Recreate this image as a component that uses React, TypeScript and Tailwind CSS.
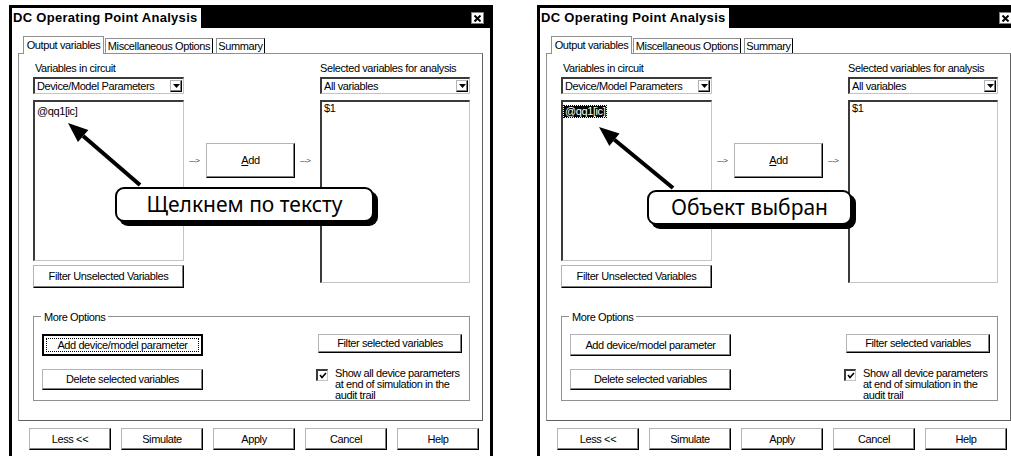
import React from "react";

const ui = "font-['Liberation_Sans',Arial,sans-serif] text-[11px] tracking-[-0.4px] text-black";

const raised =
  "border border-t-[#b4b4b4] border-l-[#b4b4b4] border-r-black border-b-black shadow-[inset_-1px_-1px_0_#808080]";
const sunken =
  "border-t-2 border-l-2 border-r border-b border-t-[#3a3a3a] border-l-[#3a3a3a] border-r-[#c4c4c4] border-b-[#c4c4c4]";

const Button = ({
  label,
  className = "",
  isDefault = false,
}: {
  label: React.ReactNode;
  className?: string;
  isDefault?: boolean;
}) => {
  if (isDefault) {
    return (
      <div className={`flex border-2 border-black bg-white p-[2px] ${className}`}>
        <div className="flex flex-1 items-center justify-center border border-dotted border-black">{label}</div>
      </div>
    );
  }
  return <div className={`flex items-center justify-center bg-white ${raised} ${className}`}>{label}</div>;
};

const Dropdown = ({ value }: { value: string }) => (
  <div className={`flex h-[17px] items-center bg-white ${sunken}`}>
    <span className="flex-1 truncate pl-[2px] leading-none">{value}</span>
    <span className={`mr-[1px] flex h-[12px] w-[12px] items-center justify-center ${raised}`}>
      <svg width="7" height="4" viewBox="0 0 7 4">
        <polygon points="0,0 7,0 3.5,4" fill="#000" />
      </svg>
    </span>
  </div>
);

const Arrow = ({ tip, tail }: { tip: [number, number]; tail: [number, number] }) => {
  const dx = tail[0] - tip[0];
  const dy = tail[1] - tip[1];
  const len = Math.hypot(dx, dy);
  const ux = dx / len;
  const uy = dy / len;
  const bx = tip[0] + ux * 20;
  const by = tip[1] + uy * 20;
  const px = -uy * 8;
  const py = ux * 8;
  return (
    <svg className="pointer-events-none absolute left-0 top-0" width="220" height="220">
      <line x1={bx} y1={by} x2={tail[0]} y2={tail[1]} stroke="#000" strokeWidth="4" />
      <polygon points={`${tip[0]},${tip[1]} ${bx + px},${by + py} ${bx - px},${by - py}`} fill="#000" />
    </svg>
  );
};

const Dialog = ({
  selected,
  callout,
  bubble,
  tip,
  tail,
}: {
  selected: boolean;
  callout: string;
  bubble: string;
  tip: [number, number];
  tail: [number, number];
}) => (
  <div className={`relative h-[470px] w-[484px] shrink-0 border-[3px] border-b-0 border-black bg-white ${ui}`}>
    {/* title bar */}
    <div className="flex h-[20px] items-start justify-between bg-black">
      <span className="flex h-full items-center bg-white pl-[1px] pr-[3px] text-[13px] font-bold tracking-[0.3px]">
        DC Operating Point Analysis
      </span>
      <span className="mr-[6px] mt-[4px] flex h-[12px] w-[13px] items-center justify-center border border-[#808080] bg-white">
        <svg width="7" height="7" viewBox="0 0 7 7">
          <path d="M0.5 0.5 L6.5 6.5 M6.5 0.5 L0.5 6.5" stroke="#000" strokeWidth="2" />
        </svg>
      </span>
    </div>

    {/* tabs */}
    <div className="ml-[11px] mt-[8px] flex items-end gap-[1px]">
      <div className="relative z-10 -mb-[1px] flex h-[18px] w-[81px] items-center justify-center border border-b-0 border-[#909090] bg-white">
        Output variables
      </div>
      <div className="flex h-[15px] w-[108px] items-center justify-center border border-b-0 border-[#909090] border-r-black">
        Miscellaneous Options
      </div>
      <div className="ml-[2px] flex h-[15px] w-[49px] items-center justify-center border border-b-0 border-[#909090] border-r-black">
        Summary
      </div>
    </div>

    {/* tab panel */}
    <div className="ml-[6px] w-[465px] border border-[#909090] border-r-[#606060] border-b-[#606060] pb-[19px] pl-[14px] pr-[12px] pt-[8px]">
      <div className="flex">
        <div className="flex w-[151px] flex-col">
          <div className="h-[15px] pl-[2px] leading-[13px]">Variables in circuit</div>
          <Dropdown value="Device/Model Parameters" />
          <div className={`mt-[6px] h-[161px] bg-white px-[1px] py-[1px] ${sunken}`}>
            {selected ? (
              <span className="inline-block bg-black px-[1px] leading-[11px] text-white outline-1 outline-dotted outline-black">
                @qq1[ic]
              </span>
            ) : (
              <span className="inline-block px-[1px] leading-[11px]">@qq1[ic]</span>
            )}
          </div>
          <Button label="Filter Unselected Variables" className="mt-[4px] h-[23px]" />
        </div>

        <div className="flex w-[136px] items-center self-start pl-[5px] pt-[81px]">
          <span className="w-[14px] whitespace-nowrap text-[8px] tracking-[-0.6px] text-[#333]">---&gt;</span>
          <Button label={<span><u>A</u>dd</span>} className="ml-[3px] h-[35px] w-[89px]" />
          <span className="ml-[5px] w-[14px] whitespace-nowrap text-[8px] tracking-[-0.6px] text-[#333]">---&gt;</span>
        </div>

        <div className="flex w-[150px] flex-col">
          <div className="h-[15px] leading-[13px]">Selected variables for analysis</div>
          <Dropdown value="All variables" />
          <div className={`mt-[6px] h-[183px] bg-white px-[2px] leading-[12px] ${sunken}`}>$1</div>
        </div>
      </div>

      {/* more options group */}
      <div className="relative mt-[28px] flex h-[85px] w-[437px] justify-between border border-[#909090] pl-[8px] pr-[7px] pt-[17px]">
        <span className="absolute -top-[8px] left-[7px] bg-white px-[3px]">More Options</span>
        <div className="flex flex-col gap-[13px]">
          {selected ? (
            <Button label="Add device/model parameter" className="h-[22px] w-[161px]" />
          ) : (
            <Button label="Add device/model parameter" className="h-[22px] w-[161px]" isDefault />
          )}
          <Button label="Delete selected variables" className="h-[21px] w-[161px]" />
        </div>
        <div className="flex w-[146px] flex-col">
          <Button label="Filter selected variables" className="ml-[2px] h-[20px] w-[144px]" />
          <div className="mt-[15px] flex items-start">
            <span className={`mt-[1px] flex h-[12px] w-[12px] shrink-0 items-center justify-center bg-white ${sunken}`}>
              <svg width="8" height="7" viewBox="0 0 8 7">
                <polyline points="1,3 3,5.5 7,1" fill="none" stroke="#000" strokeWidth="1.6" />
              </svg>
            </span>
            <span className="ml-[7px] leading-[11px]">
              Show all device parameters at end of simulation in the audit trail
            </span>
          </div>
        </div>
      </div>
    </div>

    {/* bottom buttons */}
    <div className="ml-[17px] mt-[7px] flex gap-[10px]">
      <Button label="Less <<" className="h-[22px] w-[82px]" />
      <Button label="Simulate" className="h-[22px] w-[82px]" />
      <Button label="Apply" className="h-[22px] w-[82px]" />
      <Button label="Cancel" className="h-[22px] w-[82px]" />
      <Button label="Help" className="h-[22px] w-[82px]" />
    </div>

    {/* annotation */}
    <Arrow tip={tip} tail={tail} />
    <div
      className={`absolute flex h-[35px] items-center justify-center rounded-[9px] border-2 border-black bg-white shadow-[4px_4px_0_#000] font-['Noto_Sans',sans-serif] text-[21px] tracking-normal ${bubble}`}
    >
      {callout}
    </div>
  </div>
);

export default function App() {
  return (
    <div className="flex h-[456px] w-[1011px] gap-[44px] overflow-hidden bg-white pl-[9px] pt-[5px]">
      <Dialog
        selected={false}
        callout="Щелкнем по тексту"
        bubble="left-[103px] top-[179px] w-[259px]"
        tip={[56, 115]}
        tail={[128, 177]}
      />
      <Dialog
        selected
        callout="Объект выбран"
        bubble="left-[107px] top-[182px] w-[205px]"
        tip={[59, 119]}
        tail={[133, 180]}
      />
    </div>
  );
}
